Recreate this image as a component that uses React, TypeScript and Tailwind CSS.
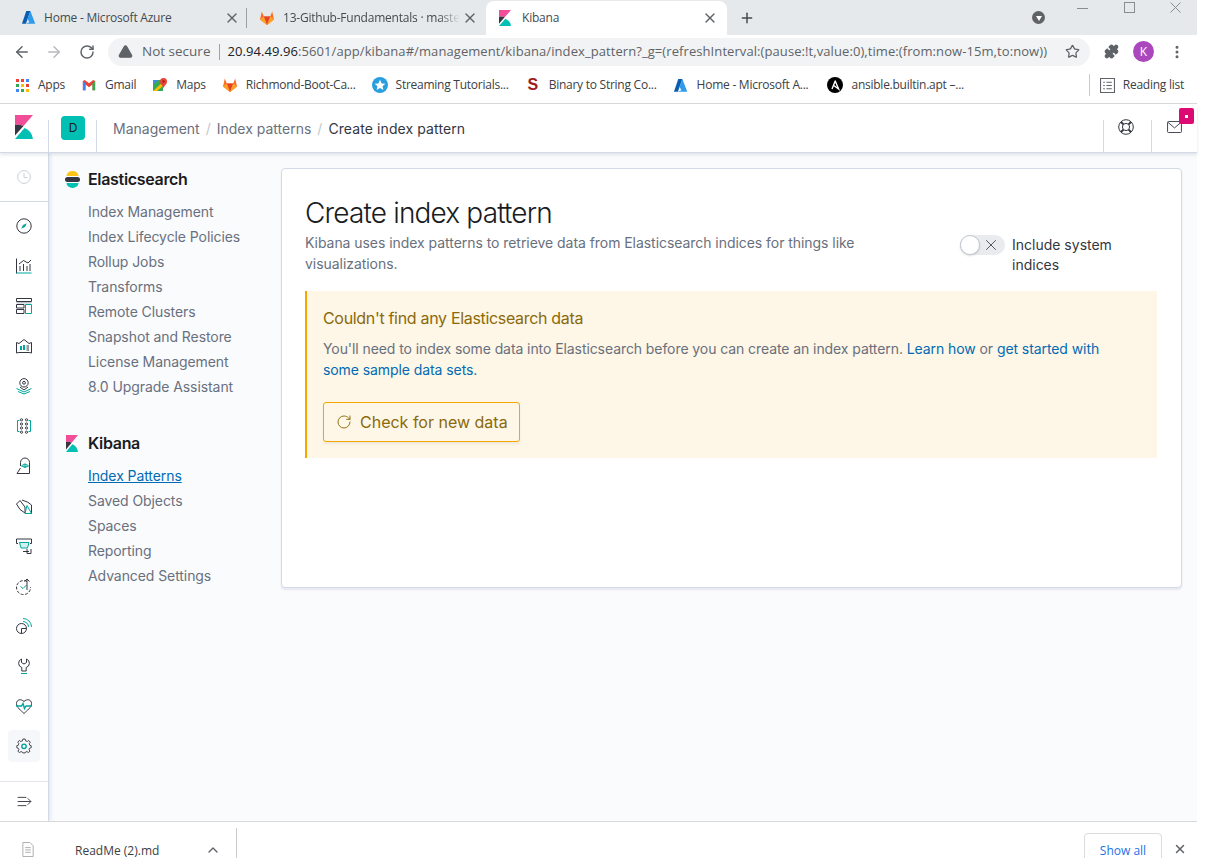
import React from 'react';
import { ChevronUp, Puzzle, Star, RotateCw, ArrowLeft, ArrowRight, Plus, X, TriangleAlert, MoreVertical } from 'lucide-react';

const ink = '#343741';
const teal = '#00a69b';

const KibanaLogo = ({ className }: { className: string }) => (
  <svg viewBox="0 0 18 24" preserveAspectRatio="none" className={className}>
    <path d="M0 0H18L8.5 11Q4 9 0 10Z" fill="#f04e98" />
    <path d="M0 10Q4 9 8.5 11L0 20.5Z" fill={ink} />
    <path d="M0 24L9.5 13Q17 16 18 24Z" fill="#00bfb3" />
  </svg>
);

const AzureLogo = () => (
  <svg viewBox="0 0 16 16" className="w-[15px] h-[15px] shrink-0">
    <path d="M5.6 1H10L5.2 14.6H1Z" fill="#0a5db0" />
    <path d="M10 1L15.2 14.6H5.2L9 13L6.8 9.4L8.6 5Z" fill="#2f9bea" />
  </svg>
);

const GitlabLogo = () => (
  <svg viewBox="0 0 16 16" className="w-[16px] h-[16px] shrink-0">
    <path d="M8 15L1 9.6L2.8 1.6L4.8 6.6H11.2L13.2 1.6L15 9.6Z" fill="#fc6d26" />
    <path d="M8 15L4.8 6.6H11.2Z" fill="#e24329" />
    <path d="M8 15L1 9.6L4.8 6.6Z" fill="#fca326" />
    <path d="M8 15L15 9.6L11.2 6.6Z" fill="#fca326" />
  </svg>
);

const AppsIcon = () => (
  <div className="grid grid-cols-3 gap-[2px] w-[13px] shrink-0">
    <i className="w-[3px] h-[3px] bg-[#ea4335]" />
    <i className="w-[3px] h-[3px] bg-[#ea4335]" />
    <i className="w-[3px] h-[3px] bg-[#4285f4]" />
    <i className="w-[3px] h-[3px] bg-[#34a853]" />
    <i className="w-[3px] h-[3px] bg-[#fbbc05]" />
    <i className="w-[3px] h-[3px] bg-[#ea4335]" />
    <i className="w-[3px] h-[3px] bg-[#4285f4]" />
    <i className="w-[3px] h-[3px] bg-[#34a853]" />
    <i className="w-[3px] h-[3px] bg-[#fbbc05]" />
  </div>
);

const GmailIcon = () => (
  <svg viewBox="0 0 16 16" className="w-[14px] h-[14px] shrink-0">
    <path d="M1 3.5V14H4V7.5L8 10.5L12 7.5V14H15V3.5L12.8 2.2L8 6L3.2 2.2Z" fill="#ea4335" />
    <path d="M1 3.5V14H4V6Z" fill="#4285f4" />
    <path d="M15 3.5V14H12V6Z" fill="#34a853" />
  </svg>
);

const MapsIcon = () => (
  <svg viewBox="0 0 16 16" className="w-[16px] h-[16px] shrink-0">
    <path d="M1 3H11V14H1Z" fill="#34a853" />
    <path d="M1 3H6L1 8Z" fill="#4285f4" />
    <path d="M1 14L11 5V9L5 14Z" fill="#fbbc05" />
    <circle cx="11.5" cy="4.5" r="3.5" fill="#ea4335" />
    <path d="M9 6.5L11.5 11L14 6.5Z" fill="#ea4335" />
    <circle cx="11.5" cy="4.5" r="1.2" fill="#a8201a" />
  </svg>
);

const StreamingIcon = () => (
  <svg viewBox="0 0 16 16" className="w-[16px] h-[16px] shrink-0">
    <circle cx="8" cy="8" r="8" fill="#2a9fe0" />
    <path d="M8 2.8L9.6 6.4L13.4 6.7L10.5 9.2L11.4 13L8 11L4.6 13L5.5 9.2L2.6 6.7L6.4 6.4Z" fill="#fff" />
  </svg>
);

const AnsibleIcon = () => (
  <svg viewBox="0 0 16 16" className="w-[16px] h-[16px] shrink-0">
    <circle cx="8" cy="8" r="8" fill="#000" />
    <path d="M8 3.4L11.6 12L6.4 8.2M5 12L8 4.6" fill="none" stroke="#fff" strokeWidth="1.4" />
  </svg>
);

const tools: React.ReactNode[] = [
  <>
    <circle cx="8" cy="8" r="7.2" stroke={ink} />
    <path d="M10.8 5.2L9 9L5.2 10.8L7 7Z" fill={teal} />
  </>,
  <>
    <path d="M.5 .5V15.5" stroke={ink} />
    <path d="M.5 15H15.5" stroke={teal} />
    <path d="M3 6L7.5 2.5L12 5L15 2" stroke={ink} />
    <path d="M4 8V13M7.5 6V13M11 8V13M14 6V13" stroke={ink} />
  </>,
  <>
    <path d="M.5 .5H15.5V3.5H.5Z" stroke={ink} />
    <path d="M.5 4H15.5V5.5H.5Z" fill="#bcc4cc" />
    <path d="M.5 6.5H8V10H.5ZM.5 11.5H8V15.5H.5Z" stroke={ink} />
    <path d="M9.5 6.5H15.5V15.5H9.5Z" stroke={teal} />
  </>,
  <>
    <path d="M.5 4.5L3 5.5L8 1.5L13 5.5L15.5 4.5V15L13 14.5H3L.5 15Z" stroke={ink} />
    <path d="M4 8H6V12H4ZM7 7H9V12H7Z" fill={teal} />
    <path d="M10.5 8H13M10.5 10H13M10.5 12H13" stroke={ink} />
  </>,
  <>
    <circle cx="8" cy="4.8" r="4.2" stroke={ink} />
    <circle cx="8" cy="4.8" r="1.4" stroke={ink} />
    <path d="M4 9L8 12L12 9" stroke={ink} />
    <path d="M.5 10.5L8 14L15.5 10.5M2 13.5L8 16L14 13.5" stroke={teal} />
  </>,
  <>
    <path d="M3.5 2.5H1.5V13.5H3.5M12.5 2.5H14.5V13.5H12.5" stroke={teal} />
    <circle cx="5.5" cy="1.8" r="1.1" stroke={ink} />
    <circle cx="10.5" cy="1.8" r="1.1" stroke={ink} />
    <circle cx="5.5" cy="6" r="1.1" stroke={ink} />
    <circle cx="10.5" cy="6" r="1.1" stroke={ink} />
    <circle cx="5.5" cy="10" r="1.1" stroke={ink} />
    <circle cx="10.5" cy="10" r="1.1" stroke={ink} />
    <circle cx="5.5" cy="14.2" r="1.1" stroke={ink} />
    <circle cx="10.5" cy="14.2" r="1.1" stroke={ink} />
  </>,
  <>
    <path d="M4.5 8V4.5A4 4 0 0 1 13.5 4.5V15.5H1L4.5 10" stroke={ink} />
    <path d="M5.5 8Q9 4 12.5 8Q9 11 5.5 8Z" stroke={teal} />
    <circle cx="9" cy="7.8" r="1.1" stroke={teal} />
  </>,
  <>
    <path d="M6 2Q13 4 15.5 7V15.5H12" stroke={ink} />
    <path d="M.5 6L4 2.5L9 9V15L4 11.5Z" stroke={ink} />
    <path d="M9 15.5H15.5L11 7.5Z" stroke={teal} />
  </>,
  <>
    <path d="M2 5.5H.5V1H15.5V5.5H14" stroke={ink} />
    <path d="M3.5 4.5H13L11.5 10H5Z" stroke={teal} fill="#d5f0ed" />
    <path d="M11 11V15.5H15V11M7 13.5H13" stroke={ink} />
  </>,
  <>
    <path d="M11 3.5A7 7 0 1 0 14.5 9" stroke={ink} strokeDasharray="3 1.5" />
    <path d="M4.5 8.5L7 10.5L10.5 7" stroke={teal} />
    <path d="M11 12V1M8.5 3.5L11 1L13.5 3.5" stroke={ink} />
  </>,
  <>
    <path d="M7 .5A8.5 8.5 0 0 1 15.5 9M7 3.5A5.5 5.5 0 0 1 12.5 9" stroke={teal} />
    <circle cx="5.5" cy="10.5" r="5" stroke={ink} />
    <path d="M5.5 10.5V15.5M5.5 10.5H10.5" stroke={ink} />
  </>,
  <>
    <path d="M5.5 1A4.5 4.5 0 0 0 5.8 9.5V13H10.2V9.5A4.5 4.5 0 0 0 10.5 1V4.5L8 6L5.5 4.5Z" stroke={ink} />
    <path d="M5 15.5H11" stroke={teal} />
  </>,
  <>
    <path d="M8 3.5C5 .5 .5 1.5 .5 5.5C.5 9.5 5 12.5 8 15.5C11 12.5 15.5 9.5 15.5 5.5C15.5 1.5 11 .5 8 3.5Z" stroke={ink} />
    <path d="M0 8H5.5L7 5.5L8.5 10.5L10 8H16" stroke={teal} strokeWidth="1.4" />
  </>,
  <>
    <path
      d="M6.7 .6H9.3L9.8 2.6L11.6 3.3L13.3 2.2L15 4.1L13.8 5.8L14.5 7.5L16 8V10.3L14.2 10.8L13.6 12.5L14.6 14.2L12.8 15.6L11.2 14.5L9.4 15.3V16H6.7L6.3 15.2L4.6 14.5L3 15.6L1.2 14.2L2.3 12.5L1.6 10.8L0 10.3V8L1.6 7.5L2.3 5.8L1.1 4.1L2.8 2.2L4.5 3.3L6.2 2.6Z"
      stroke={ink}
      transform="translate(.8 .5) scale(.9)"
    />
    <circle cx="8" cy="8.3" r="2.2" stroke={teal} strokeWidth="1.4" />
  </>,
];

const elastic = ['Index Management', 'Index Lifecycle Policies', 'Rollup Jobs', 'Transforms', 'Remote Clusters', 'Snapshot and Restore', 'License Management', '8.0 Upgrade Assistant'];
const kibana = ['Index Patterns', 'Saved Objects', 'Spaces', 'Reporting', 'Advanced Settings'];

const Bookmark = ({ icon, label }: { icon: React.ReactNode; label: string }) => (
  <div className="flex items-center gap-[8px] mr-[16px]">
    <span className="w-[16px] flex justify-center shrink-0">{icon}</span>
    <span className="whitespace-nowrap">{label}</span>
  </div>
);

export default function App() {
  return (
    <div className="w-[1217px] h-[858px] overflow-hidden bg-white">
      <div className="w-[1197px] h-full flex flex-col font-['Open_Sans',sans-serif]">
        {/* browser tabs */}
        <div className="h-[35px] shrink-0 bg-[#e6e9ec] flex pl-[8px] text-[12px] tracking-[-0.22px] text-[#45494e] relative">
          <div className="w-[239px] flex items-center pl-[13px] relative">
            <AzureLogo />
            <span className="ml-[8px] whitespace-nowrap">Home - Microsoft Azure</span>
            <X size={16} strokeWidth={2} className="absolute left-[216px] text-[#5f6368]" />
            <div className="absolute right-0 top-[8px] h-[20px] w-px bg-[#9ca0a5]" />
          </div>
          <div className="w-[239px] flex items-center pl-[12px] relative">
            <GitlabLogo />
            <span className="ml-[8px] whitespace-nowrap [mask-image:linear-gradient(to_right,black_88%,transparent)]">13-Github-Fundamentals · maste</span>
            <X size={16} strokeWidth={2} className="absolute left-[215px] text-[#5f6368]" />
          </div>
          <div className="w-[241px] mt-[1px] flex items-center pl-[13px] relative bg-white rounded-t-[8px]">
            <KibanaLogo className="w-[12px] h-[16px] shrink-0" />
            <span className="ml-[11px]">Kibana</span>
            <X size={16} strokeWidth={2} className="absolute left-[216px] text-[#5f6368]" />
          </div>
          <div className="flex items-center">
            <Plus size={16} strokeWidth={2.2} className="ml-[12px] text-[#45494e]" />
            <div className="ml-[277px] w-[13px] h-[13px] rounded-full bg-[#5f6368] flex items-center justify-center">
              <div className="w-0 h-0 border-x-[3.5px] border-x-transparent border-t-[5px] border-t-white mt-[1px]" />
            </div>
          </div>
          {/* window controls sit on top of the tab strip */}
          <div className="absolute right-[16px] top-[2px] flex">
            <div className="w-[11px] h-px bg-[#8a8d90] mt-[6px]" />
            <div className="w-[11px] h-[11px] border border-[#8a8d90] ml-[36px]" />
            <svg viewBox="0 0 11 11" fill="none" stroke="#8a8d90" className="w-[11px] h-[11px] ml-[35px]">
              <path d="M.5 .5L10.5 10.5M10.5 .5L.5 10.5" />
            </svg>
          </div>
        </div>

        {/* address bar */}
        <div className="h-[33px] shrink-0 flex items-center pl-[13px] text-[#5f6368]">
          <ArrowLeft size={18} strokeWidth={2} />
          <ArrowRight size={18} strokeWidth={2} className="ml-[14px] text-[#b8babd]" />
          <RotateCw size={16} strokeWidth={2.2} className="ml-[16px]" />
          <div className="ml-[13px] w-[982px] h-[28px] rounded-full bg-[#f1f3f4] flex items-center pl-[10px] pr-[10px]">
            <TriangleAlert size={15} fill="#5f6368" stroke="#5f6368" />
            <span className="ml-[9px] text-[13.5px] whitespace-nowrap">Not secure</span>
            <div className="ml-[9px] w-px h-[16px] bg-[#a0a3a6]" />
            <span className="ml-[7px] text-[13px] tracking-[0.08px] whitespace-nowrap">
              <span className="text-[#202124]">20.94.49.96</span>:5601/app/kibana#/management/kibana/index_pattern?_g=(refreshInterval:(pause:!t,value:0),time:(from:now-15m,to:now))
            </span>
            <Star size={15} className="ml-auto text-[#5f6368]" />
          </div>
          <Puzzle size={15} fill="#5f6368" className="ml-[14px]" />
          <div className="ml-[14px] w-[21px] h-[21px] rounded-full bg-[#ab47bc] text-white text-[12px] flex items-center justify-center">K</div>
          <MoreVertical size={16} strokeWidth={2.5} className="ml-[15px]" />
        </div>

        {/* bookmarks */}
        <div className="h-[36px] shrink-0 flex items-center pl-[14px] pb-[1px] border-b border-[#d8d9da] text-[12px] tracking-[-0.25px] text-[#3c4043]">
          <Bookmark icon={<AppsIcon />} label="Apps" />
          <Bookmark icon={<GmailIcon />} label="Gmail" />
          <Bookmark icon={<MapsIcon />} label="Maps" />
          <Bookmark icon={<GitlabLogo />} label="Richmond-Boot-Ca..." />
          <Bookmark icon={<StreamingIcon />} label="Streaming Tutorials..." />
          <Bookmark icon={<span className="text-[#a01c1c] font-bold text-[16px] leading-none font-['Liberation_Sans',sans-serif]">S</span>} label="Binary to String Co..." />
          <Bookmark icon={<AzureLogo />} label="Home - Microsoft A..." />
          <span className="w-[3px]" />
          <Bookmark icon={<AnsibleIcon />} label="ansible.builtin.apt –..." />
          <div className="ml-auto flex items-center h-[22px] border-l border-[#c8cacc] pl-[10px] pr-[13px] gap-[8px]">
            <svg viewBox="0 0 14 14" fill="none" stroke="#5f6368" className="w-[15px] h-[15px]">
              <path d="M.5 .5H13.5V13.5H.5ZM3 4H4.5M3 7H4.5M3 10H4.5M6 4H11M6 7H11M6 10H11" />
            </svg>
            <span>Reading list</span>
          </div>
        </div>

        {/* kibana */}
        <div className="flex-1 min-h-0 flex flex-col font-['Inter',sans-serif]">
          <header className="h-[49px] shrink-0 flex bg-white border-b border-[#d3dae6] shadow-[0_2px_3px_rgba(152,162,179,0.25)] relative z-10">
            <div className="w-[49px] flex pt-[11px] pl-[15px] relative">
              <KibanaLogo className="w-[18px] h-[24px]" />
              <div className="absolute right-0 top-[16px] bottom-0 w-px bg-[#d3dae6]" />
            </div>
            <div className="w-[48px] flex pt-[12px] pl-[12px] relative">
              <div className="w-[24px] h-[24px] rounded-[4px] bg-[#00bfb3] text-[#1a1c21] text-[12px] flex items-center justify-center">D</div>
              <div className="absolute right-0 top-[16px] bottom-0 w-px bg-[#d3dae6]" />
            </div>
            <nav className="flex items-center pl-[16px] text-[14px] leading-[21px] text-[#69707d]">
              <span>Management</span>
              <span className="mx-[6px] text-[#c2c8d0]">/</span>
              <span>Index patterns</span>
              <span className="mx-[6px] text-[#c2c8d0]">/</span>
              <span className="text-[#343741] tracking-[0.1px]">Create index pattern</span>
            </nav>
            <div className="ml-auto flex items-stretch">
              <div className="w-[48px] border-l border-[#d3dae6] mt-[16px] flex justify-center pr-[3px]">
                <svg viewBox="0 0 16 16" fill="none" className="w-[16px] h-[16px] -mt-[1px]" stroke={ink}>
                  <circle cx="8" cy="8" r="7.3" />
                  <circle cx="8" cy="8" r="3.6" />
                  <path d="M3 3L5.4 5.4M13 3L10.6 5.4M3 13L5.4 10.6M13 13L10.6 10.6" strokeWidth="2" />
                </svg>
              </div>
              <div className="w-[46px] border-l border-[#d3dae6] mt-[16px] flex justify-center relative">
                <svg viewBox="0 0 16 13" fill="none" className="w-[15px] h-[12px] mt-[1px]" stroke={ink}>
                  <rect x=".5" y=".5" width="15" height="12" rx="1" />
                  <path d="M1 1.5L8 7.5L15 1.5" />
                </svg>
                <div className="absolute -top-[12px] left-[27px] w-[15px] h-[16px] rounded-[2px] bg-[#dd0a73] flex items-center justify-center">
                  <i className="w-[3px] h-[3px] bg-white" />
                </div>
              </div>
            </div>
          </header>

          <div className="flex-1 min-h-0 flex bg-[#fafbfd]">
            {/* icon rail */}
            <aside className="w-[49px] shrink-0 bg-white border-r border-[#d3dae6] shadow-[2px_0_3px_rgba(152,162,179,0.2)] flex flex-col">
              <div className="h-[49px] shrink-0 border-b border-[#d3dae6] flex items-center justify-center">
                <svg viewBox="0 0 16 16" fill="none" className="w-[14px] h-[14px]" stroke="#c2c8d0">
                  <circle cx="8" cy="8" r="7.3" />
                  <path d="M8 3.5V8.5H12" />
                </svg>
              </div>
              <div className="flex flex-col pt-[4px]">
                {tools.map((t, i) => (
                  <div key={i} className={i === 13 ? 'h-[32px] mt-[4px] mx-[8px] rounded-[4px] bg-[#f5f7fa] flex items-center justify-center' : 'h-[40px] flex items-center justify-center'}>
                    <svg viewBox="0 0 16 16" fill="none" className="w-[16px] h-[16px] overflow-visible">{t}</svg>
                  </div>
                ))}
              </div>
              <div className="mt-auto h-[40px] shrink-0 border-t border-[#e4e7ed] flex items-center justify-center">
                <svg viewBox="0 0 16 12" fill="none" className="w-[15px] h-[11px]" stroke={ink}>
                  <path d="M.5 1.5H10M.5 6H15M.5 10.5H10M11.5 2.5L15 6L11.5 9.5" />
                </svg>
              </div>
            </aside>

            {/* management nav */}
            <nav className="w-[231px] shrink-0 pl-[16px] pt-[14px] text-[14px] leading-[25px] tracking-[-0.08px] text-[#69707d]">
              <div className="flex items-center h-[24px] text-[16px] tracking-[-0.32px] font-semibold text-[#1a1c21]">
                <svg viewBox="0 0 15 17" className="w-[15px] h-[17px] mr-[8px]">
                  <path d="M1.5 5A6 5 0 0 1 13.5 5Z" fill="#fec514" />
                  <rect x="0" y="6" width="15" height="5" rx="2.5" fill={ink} />
                  <path d="M1.5 12H13.5A6 5 0 0 1 1.5 12Z" fill="#00bfb3" />
                </svg>
                Elasticsearch
              </div>
              <ul className="pl-[23px] mt-[8px]">
                {elastic.map(item => <li key={item}>{item}</li>)}
              </ul>
              <div className="flex items-center h-[24px] mt-[32px] text-[16px] tracking-[-0.32px] font-semibold text-[#1a1c21]">
                <KibanaLogo className="w-[12px] h-[17px] mr-[10px] ml-[1px]" />
                Kibana
              </div>
              <ul className="pl-[23px] mt-[8px]">
                {kibana.map((item, i) => (
                  <li key={item} className={i === 0 ? 'text-[#006bb4] underline' : ''}>{item}</li>
                ))}
              </ul>
            </nav>

            {/* page */}
            <main className="flex-1 min-w-0 pt-[15px] pr-[15px] pl-px">
              <div className="h-[420px] bg-white border border-[#d3dae6] rounded-[4px] shadow-[0_2px_2px_rgba(152,162,179,0.2)] pl-[23px] pr-[24px] pt-[26px]">
                <h1 className="text-[28px] leading-[36px] mb-[1px] font-light tracking-[-0.84px] text-[#1a1c21]">Create index pattern</h1>
                <div className="flex">
                  <p className="w-[560px] text-[14px] leading-[21px] tracking-[-0.05px] text-[#69707d]">
                    Kibana uses index patterns to retrieve data from Elasticsearch indices for things like visualizations.
                  </p>
                  <div className="ml-[95px] flex text-[14px] leading-[20px] text-[#343741]">
                    <div className="w-[45px] h-[20px] mt-[3px] rounded-full bg-[#e9ebef] relative flex items-center justify-end pr-[5px]">
                      <div className="absolute left-0 top-0 w-[20px] h-[20px] rounded-full bg-white border border-[#c2c8d0] shadow-[0_1px_2px_rgba(0,0,0,0.15)]" />
                      <X size={18} strokeWidth={1.1} className="text-[#343741]" />
                    </div>
                    <span className="ml-[7px] w-[120px] mt-[3px]">Include system indices</span>
                  </div>
                </div>
                <div className="mt-[16px] h-[167px] bg-[#fef6e6] border-l-2 border-[#f5a700] pl-[16px] pt-[15px]">
                  <h2 className="text-[16px] leading-[24px] tracking-[-0.32px] text-[#8a6a0a]">Couldn't find any Elasticsearch data</h2>
                  <p className="mt-[8px] text-[14px] leading-[21px] tracking-[-0.08px] text-[#69707d]">
                    You'll need to index some data into Elasticsearch before you can create an index pattern. <span className="text-[#006bb4]">Learn how</span> or <span className="text-[#006bb4]">get started with<br />some sample data sets.</span>
                  </p>
                  <button className="mt-[22px] w-[197px] h-[40px] rounded-[3px] border border-[#f5a700] flex items-center pl-[12px] gap-[8px] text-[16px] text-[#8a6a0a] shadow-[0_2px_2px_rgba(152,162,179,0.15)]">
                    <RotateCw size={16} strokeWidth={1.4} />
                    Check for new data
                  </button>
                </div>
              </div>
            </main>
          </div>
        </div>

        {/* downloads */}
        <div className="h-[37px] shrink-0 bg-white border-t border-[#d8d9da] flex text-[12px] relative overflow-hidden font-['Open_Sans',sans-serif]">
          <div className="w-[237px] flex border-r border-[#c8cacc] mt-[6px] pl-[22px] relative">
            <svg viewBox="0 0 12 16" fill="none" className="w-[12px] h-[15px] mt-[14px]" stroke="#a8abae">
              <path d="M.5 .5H8L11.5 4V15.5H.5ZM3 6H9M3 8.5H9M3 11H9" />
            </svg>
            <span className="ml-[41px] mt-[14px] text-[#3c4043] whitespace-nowrap">ReadMe (2).md</span>
            <ChevronUp size={16} strokeWidth={2} className="absolute left-[205px] top-[14px] text-[#5f6368]" />
          </div>
          <div className="ml-auto flex items-start pt-[11px]">
            <div className="w-[78px] h-[40px] rounded-[4px] border border-[#dadce0] text-center pt-[8px] text-[#1a73e8]">Show all</div>
            <X size={14} strokeWidth={2.5} className="ml-[11px] mr-[10px] mt-[9px] text-[#5f6368]" />
          </div>
        </div>
      </div>
    </div>
  );
}
